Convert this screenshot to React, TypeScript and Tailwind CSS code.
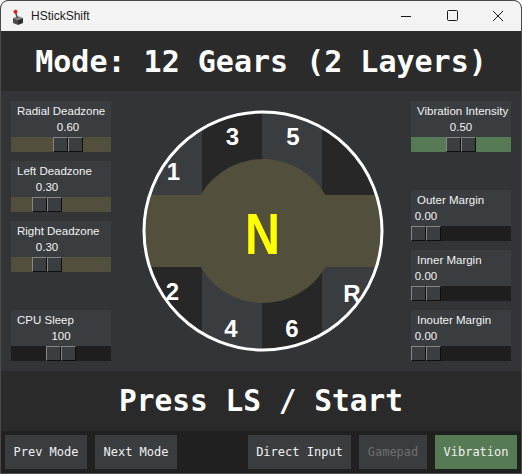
const LABEL_FONT = { fontFamily: '"Liberation Sans", Arial, sans-serif' };
const MONO = '[font-family:"DejaVu_Sans_Mono","Liberation_Mono",monospace]';

type SliderProps = {
  label: string;
  value: number;
  max: number;
  text: string;
  track: string;
};

function Handle() {
  return (
    <div className="flex h-[15px]">
      <div className="h-[15px] w-[15px] border-t border-l border-b border-r border-t-[#858585] border-l-[#858585] border-b-[#0e0e0e] border-r-[#0e0e0e] bg-[#3b3e41]" />
      <div className="h-[15px] w-[15px] border-t border-l border-b border-r border-t-[#858585] border-l-[#858585] border-b-[#0e0e0e] border-r-[#0e0e0e] bg-[#3b3e41]" />
    </div>
  );
}

function Slider({ label, value, max, text, track }: SliderProps) {
  // handle travels 70px across a 100px track
  const left = Math.round((value / max) * 70);
  return (
    <div className="flex h-[51px] w-[100px] flex-col overflow-hidden bg-[#3a3d40] text-[11.5px] text-[#f2f2f2]" style={LABEL_FONT}>
      <div className="mt-[2px] h-[16px] whitespace-nowrap pl-[6px] leading-[16px]">{label}</div>
      <div className="h-[16px] w-[30px] text-center leading-[16px]" style={{ marginLeft: left }}>
        {text}
      </div>
      <div className={`mt-[2px] h-[15px] ${track}`}>
        <div style={{ marginLeft: left }}>
          <Handle />
        </div>
      </div>
    </div>
  );
}

function Shifter() {
  const light = "#3a3d40";
  const dark = "#272727";
  const olive = "#524f3c";
  const num = { fontFamily: '"Liberation Sans", Arial, sans-serif', fontWeight: 700 };
  return (
    <svg width="244" height="244" viewBox="0 0 244 244">
      <defs>
        <clipPath id="disc">
          <circle cx="122" cy="122" r="118" />
        </clipPath>
      </defs>
      <g clipPath="url(#disc)">
        <rect x="0" y="0" width="61" height="86" fill={light} />
        <rect x="61" y="0" width="60" height="86" fill={dark} />
        <rect x="121" y="0" width="60" height="86" fill={light} />
        <rect x="181" y="0" width="63" height="86" fill={dark} />
        <rect x="0" y="158" width="61" height="86" fill={dark} />
        <rect x="61" y="158" width="60" height="86" fill={light} />
        <rect x="121" y="158" width="60" height="86" fill={dark} />
        <rect x="181" y="158" width="63" height="86" fill={light} />
        <rect x="0" y="86" width="244" height="72" fill={olive} />
        <circle cx="122" cy="122" r="72" fill={olive} />
      </g>
      <circle cx="122" cy="122" r="119" fill="none" stroke="#ffffff" strokeWidth="3" />
      <g fill="#ffffff" fontSize="24" textAnchor="middle" style={num}>
        <text x="32.5" y="71">1</text>
        <text x="91.5" y="36">3</text>
        <text x="152" y="36">5</text>
        <text x="31.5" y="191">2</text>
        <text x="90" y="228">4</text>
        <text x="151" y="228">6</text>
        <text x="211" y="193">R</text>
      </g>
      <text
        x="121.5"
        y="145"
        fill="#ffff00"
        fontSize="58"
        textAnchor="middle"
        textLength="35"
        lengthAdjust="spacingAndGlyphs"
        style={num}
      >
        N
      </text>
    </svg>
  );
}

function JoystickIcon() {
  return (
    <svg width="14" height="16" viewBox="0 0 14 16">
      <polygon points="2,9 7,7 12,9 7,11" fill="#8a8a8a" />
      <polygon points="2,9 7,11 7,16 2,14" fill="#4b4b4b" />
      <polygon points="7,11 12,9 12,14 7,16" fill="#2e2e2e" />
      <line x1="4.5" y1="3" x2="6.5" y2="9.5" stroke="#555555" strokeWidth="1.5" />
      <circle cx="4.5" cy="2.8" r="2" fill="#e0201e" />
    </svg>
  );
}

export default function App() {
  return (
    <div className="flex h-[474px] w-[522px] flex-col overflow-hidden rounded-t-[8px] border border-[#4a4a4a] bg-[#202020]">
      {/* title bar */}
      <div className="flex h-[30px] shrink-0 items-center bg-[#f3f3f3] text-[12px] text-[#1b1b1b]" style={LABEL_FONT}>
        <div className="ml-[10px] mt-[1px]">
          <JoystickIcon />
        </div>
        <span className="ml-[6px]">HStickShift</span>
        <div className="ml-auto flex items-center">
          <svg width="46" height="30" viewBox="0 0 46 30">
            <line x1="18" y1="15.5" x2="28" y2="15.5" stroke="#1b1b1b" strokeWidth="1" />
          </svg>
          <svg width="46" height="30" viewBox="0 0 46 30">
            <rect x="18.5" y="9.5" width="10" height="10" rx="1" fill="none" stroke="#1b1b1b" strokeWidth="1" />
          </svg>
          <svg width="46" height="30" viewBox="0 0 46 30">
            <path d="M18 10 L28 20 M28 10 L18 20" stroke="#1b1b1b" strokeWidth="1" />
          </svg>
        </div>
      </div>

      {/* mode header */}
      <div className={`flex h-[60px] shrink-0 items-center justify-center bg-[#2b2b2b] text-[30px] font-bold text-white ${MONO}`}>
        Mode: 12 Gears (2 Layers)
      </div>

      {/* main */}
      <div className="flex h-[280px] shrink-0 bg-[#323436] px-[10px] py-[10px]">
        <div className="flex flex-col gap-[9px]">
          <Slider label="Radial Deadzone" value={0.6} max={1} text="0.60" track="bg-[#524f3c]" />
          <Slider label="Left Deadzone" value={0.3} max={1} text="0.30" track="bg-[#524f3c]" />
          <Slider label="Right Deadzone" value={0.3} max={1} text="0.30" track="bg-[#524f3c]" />
          <div className="mt-auto">
            <Slider label="CPU Sleep" value={100} max={200} text="100" track="bg-[#1e1e1e]" />
          </div>
        </div>
        <div className="flex flex-1 items-center justify-center">
          <div className="ml-[3px]">
            <Shifter />
          </div>
        </div>
        <div className="flex flex-col gap-[9px]">
          <Slider label="Vibration Intensity" value={0.5} max={1} text="0.50" track="bg-[#567a53]" />
          <div className="mt-auto">
            <Slider label="Outer Margin" value={0} max={1} text="0.00" track="bg-[#1e1e1e]" />
          </div>
          <Slider label="Inner Margin" value={0} max={1} text="0.00" track="bg-[#1e1e1e]" />
          <Slider label="Inouter Margin" value={0} max={1} text="0.00" track="bg-[#1e1e1e]" />
        </div>
      </div>

      {/* status */}
      <div className={`flex h-[60px] shrink-0 items-center justify-center bg-[#2a2a2a] text-[29.5px] font-bold text-white ${MONO}`}>
        Press LS / Start
      </div>

      {/* buttons */}
      <div className={`flex flex-1 items-start gap-[8px] bg-[#202020] px-[4px] pt-[4px] text-[12px] ${MONO}`}>
        <button className="h-[34px] w-[82px] bg-[#3a3d40] text-[#f0f0f0]">Prev Mode</button>
        <button className="h-[34px] w-[82px] bg-[#3a3d40] text-[#f0f0f0]">Next Mode</button>
        <button className="ml-auto h-[34px] w-[103px] bg-[#3a3d40] text-[#f0f0f0]">Direct Input</button>
        <button className="h-[34px] w-[68px] bg-[#3a3d40] text-[#6e6e6e]">Gamepad</button>
        <button className="h-[34px] w-[82px] bg-[#567a53] text-[#f0f0f0]">Vibration</button>
      </div>
    </div>
  );
}
